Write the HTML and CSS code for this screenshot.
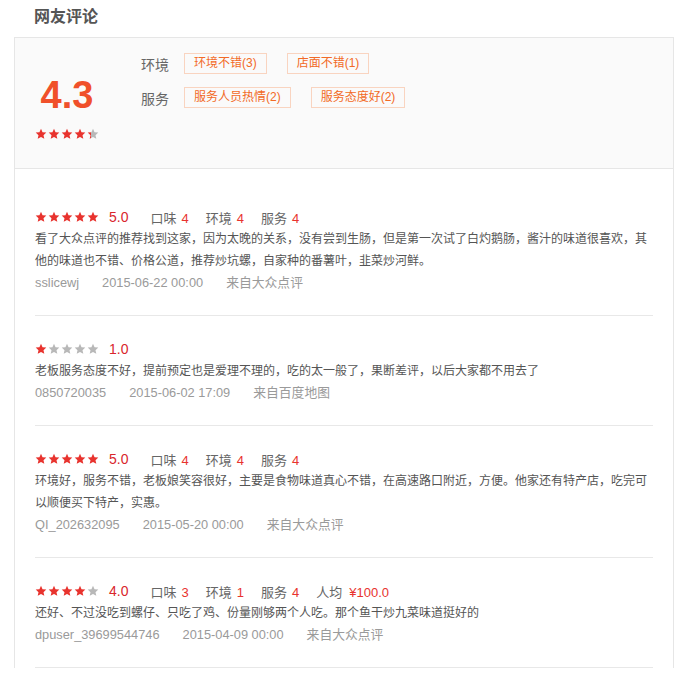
FILE: index.html
```html
<!DOCTYPE html>
<html lang="zh-CN">
<head>
    <meta charset="UTF-8">
    <title>网友评论</title>
    <link rel="stylesheet" href="styles.css">
</head>
<body>
    <svg class="svg-defs" aria-hidden="true">
        <defs>
            <symbol id="star" viewBox="0 0 24 24">
                <path d="M12 1.6l3.1 6.8 7.5.8-5.6 5.1 1.6 7.4L12 17.9l-6.6 3.8 1.6-7.4-5.6-5.1 7.5-.8z"/>
            </symbol>
            <linearGradient id="starPart">
                <stop offset="30%" stop-color="#e8332e"/>
                <stop offset="30%" stop-color="#b8b8b8"/>
            </linearGradient>
        </defs>
    </svg>

    <h2 class="title">网友评论</h2>

    <div class="box">
        <div class="summary">
            <div class="score-col">
                <div class="big-score">4.3</div>
                <div class="stars">
                    <svg class="on"><use href="#star"/></svg>
                    <svg class="on"><use href="#star"/></svg>
                    <svg class="on"><use href="#star"/></svg>
                    <svg class="on"><use href="#star"/></svg>
                    <svg class="part"><use href="#star"/></svg>
                </div>
            </div>
            <div class="tags">
                <div class="tag-row">
                    <span class="tag-label">环境</span>
                    <span class="tag">环境不错(3)</span>
                    <span class="tag">店面不错(1)</span>
                </div>
                <div class="tag-row">
                    <span class="tag-label">服务</span>
                    <span class="tag">服务人员热情(2)</span>
                    <span class="tag">服务态度好(2)</span>
                </div>
            </div>
        </div>

        <div class="reviews">
            <div class="review">
                <div class="review-head">
                    <div class="stars">
                        <svg class="on"><use href="#star"/></svg>
                        <svg class="on"><use href="#star"/></svg>
                        <svg class="on"><use href="#star"/></svg>
                        <svg class="on"><use href="#star"/></svg>
                        <svg class="on"><use href="#star"/></svg>
                    </div>
                    <span class="score">5.0</span>
                    <span class="item">口味<em>4</em></span>
                    <span class="item">环境<em>4</em></span>
                    <span class="item">服务<em>4</em></span>
                </div>
                <p class="review-text">看了大众点评的推荐找到这家，因为太晚的关系，没有尝到生肠，但是第一次试了白灼鹅肠，酱汁的味道很喜欢，其他的味道也不错、价格公道，推荐炒坑螺，自家种的番薯叶，韭菜炒河鲜。</p>
                <div class="review-meta">
                    <span>sslicewj</span>
                    <span>2015-06-22 00:00</span>
                    <span>来自大众点评</span>
                </div>
            </div>

            <div class="review">
                <div class="review-head">
                    <div class="stars">
                        <svg class="on"><use href="#star"/></svg>
                        <svg><use href="#star"/></svg>
                        <svg><use href="#star"/></svg>
                        <svg><use href="#star"/></svg>
                        <svg><use href="#star"/></svg>
                    </div>
                    <span class="score">1.0</span>
                </div>
                <p class="review-text">老板服务态度不好，提前预定也是爱理不理的，吃的太一般了，果断差评，以后大家都不用去了</p>
                <div class="review-meta">
                    <span>0850720035</span>
                    <span>2015-06-02 17:09</span>
                    <span>来自百度地图</span>
                </div>
            </div>

            <div class="review">
                <div class="review-head">
                    <div class="stars">
                        <svg class="on"><use href="#star"/></svg>
                        <svg class="on"><use href="#star"/></svg>
                        <svg class="on"><use href="#star"/></svg>
                        <svg class="on"><use href="#star"/></svg>
                        <svg class="on"><use href="#star"/></svg>
                    </div>
                    <span class="score">5.0</span>
                    <span class="item">口味<em>4</em></span>
                    <span class="item">环境<em>4</em></span>
                    <span class="item">服务<em>4</em></span>
                </div>
                <p class="review-text">环境好，服务不错，老板娘笑容很好，主要是食物味道真心不错，在高速路口附近，方便。他家还有特产店，吃完可以顺便买下特产，实惠。</p>
                <div class="review-meta">
                    <span>QI_202632095</span>
                    <span>2015-05-20 00:00</span>
                    <span>来自大众点评</span>
                </div>
            </div>

            <div class="review">
                <div class="review-head">
                    <div class="stars">
                        <svg class="on"><use href="#star"/></svg>
                        <svg class="on"><use href="#star"/></svg>
                        <svg class="on"><use href="#star"/></svg>
                        <svg class="on"><use href="#star"/></svg>
                        <svg><use href="#star"/></svg>
                    </div>
                    <span class="score">4.0</span>
                    <span class="item">口味<em>3</em></span>
                    <span class="item">环境<em>1</em></span>
                    <span class="item">服务<em>4</em></span>
                    <span class="item">人均<em class="price">¥100.0</em></span>
                </div>
                <p class="review-text">还好、不过没吃到螺仔、只吃了鸡、份量刚够两个人吃。那个鱼干炒九菜味道挺好的</p>
                <div class="review-meta">
                    <span>dpuser_39699544746</span>
                    <span>2015-04-09 00:00</span>
                    <span>来自大众点评</span>
                </div>
            </div>
        </div>
    </div>
</body>
</html>
```

FILE: styles.css
```css
body {
    margin: 0;
    font-family: "Liberation Sans", "Noto Sans CJK SC", sans-serif;
    color: #555;
    background: #fff;
}
.svg-defs {
    position: absolute;
    width: 0;
    height: 0;
    overflow: hidden;
}
.title {
    margin: 0 0 8px;
    padding: 5px 0 0 34px;
    font-size: 16px;
    line-height: 24px;
    font-weight: bold;
    color: #555;
}
.box {
    margin-left: 14px;
    width: 658px;
    border: 1px solid #e6e6e6;
    border-bottom: none;
}

/* summary */
.summary {
    display: flex;
    background: #fafafa;
    border-bottom: 1px solid #e6e6e6;
}
.score-col {
    width: 104px;
    display: flex;
    flex-direction: column;
    align-items: center;
    padding: 37px 0 27px;
}
.big-score {
    font-size: 38px;
    line-height: 40px;
    font-weight: bold;
    color: #f0502a;
    margin-bottom: 12px;
}
.tags {
    margin-left: 22px;
    padding-top: 15px;
}
.tag-row {
    display: flex;
    align-items: center;
    height: 21px;
    margin-bottom: 13px;
}
.tag-label {
    width: 43px;
    font-size: 14px;
    color: #666;
}
.tag {
    box-sizing: border-box;
    height: 21px;
    line-height: 19px;
    padding: 0 9px;
    margin-right: 20px;
    border: 1px solid #f9d4c0;
    font-size: 12px;
    color: #f26a26;
}

/* stars */
.stars {
    display: flex;
    gap: 1px;
    height: 14px;
    align-items: center;
}
.stars svg {
    width: 12px;
    height: 12px;
    fill: #b8b8b8;
}
.stars svg.on {
    fill: #e8332e;
}
.stars svg.part {
    fill: url(#starPart);
}

/* reviews */
.reviews {
    padding: 15px 20px 0;
}
.review {
    padding: 22px 0 21px;
    border-bottom: 1px solid #e8e8e8;
}
.review-head {
    display: flex;
    align-items: center;
    height: 22px;
}
.score {
    margin: 0 22px 0 10px;
    font-size: 14px;
    color: #d9262c;
}
.item {
    margin-right: 17px;
    font-size: 13px;
    color: #666;
}
.item em {
    font-style: normal;
    color: #e8332e;
    margin-left: 5px;
}
.item em.price {
    margin-left: 7px;
}
.review-text {
    margin: 0;
    font-size: 12px;
    line-height: 22px;
    color: #555;
}
.review-meta {
    display: flex;
    line-height: 22px;
    font-size: 12.8px;
    color: #9a9a9a;
}
.review-meta span {
    margin-right: 23px;
}
```
